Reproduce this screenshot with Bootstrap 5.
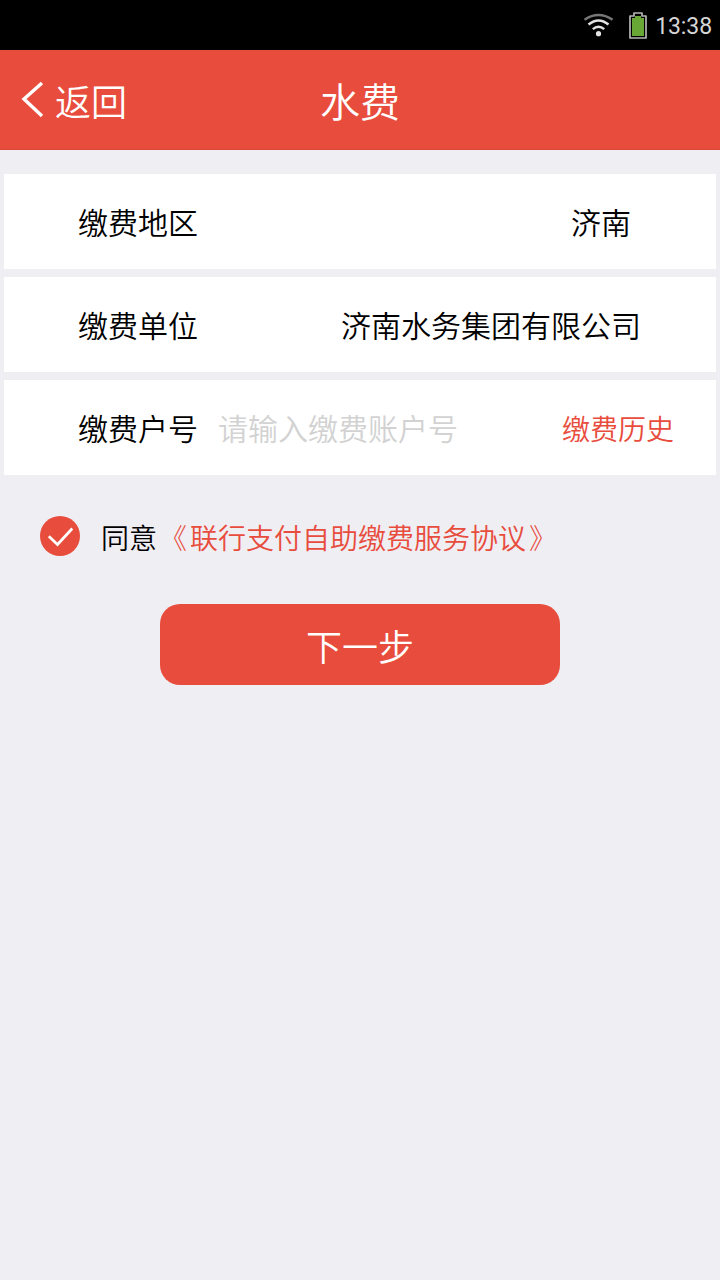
<!DOCTYPE html>
<html lang="zh-CN">
<head>
<meta charset="utf-8">
<meta name="viewport" content="width=device-width, initial-scale=1">
<title>水费</title>
<link href="https://cdn.jsdelivr.net/npm/bootstrap@5.3.0/dist/css/bootstrap.min.css" rel="stylesheet">
<style>
  :root { --brand: #e84c3d; }
  body { background: #efeef3; color: #000; font-family: "Noto Sans CJK SC", sans-serif; font-weight: 350; min-height: 1280px; line-height: 1; }
  .statusbar { height: 50px; background: #000; color: #d6d6d6; font: 400 23px/1 Roboto, sans-serif; padding: 0 8px 0 0; }
  .clock { letter-spacing: -.1px; padding-top: 2px; }
  .topbar { height: 100px; background: var(--brand); border-bottom: 1px solid #dc4638; color: #fff; display: grid; grid-template-columns: 1fr auto 1fr; padding: 0 21px; }
  .topbar h1 { font-size: 40px; font-weight: 350; line-height: 1; }
  .back { color: #fff; font-size: 36px; gap: 11px; }
  .fields { padding: 24px 4px 0; gap: 8px; }
  .field-row { height: 95px; background: #fff; font-size: 30px; padding: 0 75px 1px 74px; }
  .field-row.region { padding-right: 85px; }
  .field-row.account { padding-right: 42px; }
  .field-row .form-control { font-size: 30px; font-weight: 350; line-height: 1.4; margin-left: 20px; width: 320px; background: none; }
  .form-control::placeholder { color: #d2d2d2; opacity: 1; }
  .accent { color: var(--brand); font-size: 28px; }
  .account .accent { padding-top: 2px; }
  .agree { padding: 41px 40px 0; font-size: 28px; }
  .agree-text { margin: 1px 2px 0 21px; }
  .agree .accent { margin-top: 1px; font-weight: 300; }
  .agree .title-name { margin: 0 3px 0 3px; font-weight: 350; }
  .next { width: 400px; height: 81px; margin-top: 48px; border-radius: 20px; background: var(--brand) !important; color: #fff !important; font-size: 36px; font-weight: 350; line-height: 1; padding: 1px 0 0; border: 0; }
</style>
</head>
<body>
<div class="statusbar d-flex align-items-center justify-content-end">
  <svg width="30" height="24" viewBox="0 0 30 24" fill="none" stroke-width="2.4">
    <path d="M1.5 6.7Q15.5-2.6 29.5 6.7" stroke="#777"/>
    <path d="M5.5 11.5Q15.5 3.3 25.5 11.5M9.8 16.2Q15.5 11.2 21.2 16.2" stroke="#e2e2e2"/>
    <circle cx="15.5" cy="20.7" r="2.6" fill="#e2e2e2"/>
  </svg>
  <svg class="ms-3 me-2" width="18" height="27" viewBox="0 0 18 27">
    <path d="M1 4H5V1H13V4H17V26H1Z" fill="#000" stroke="#b5b5b5" stroke-width="1.7" stroke-linejoin="round"/>
    <path d="M3 6H6V4H12V6H15V24H3Z" fill="#68a735"/>
  </svg>
  <span class="clock">13:38</span>
</div>
<header class="topbar align-items-center">
  <a href="#" class="back d-flex align-items-center text-decoration-none">
    <svg width="23" height="38" viewBox="0 0 23 38" fill="none" stroke="#fff" stroke-width="3.4"><path d="M21 2L3 18L21 35"/></svg>
    <span>返回</span>
  </a>
  <h1 class="mb-0">水费</h1>
</header>
<main class="d-flex flex-column">
  <form class="fields d-flex flex-column">
    <div class="field-row region d-flex align-items-center justify-content-between"><span>缴费地区</span><span>济南</span></div>
    <div class="field-row unit d-flex align-items-center justify-content-between"><span>缴费单位</span><span>济南水务集团有限公司</span></div>
    <div class="field-row account d-flex align-items-center"><label for="acct">缴费户号</label><input id="acct" class="form-control border-0 p-0" placeholder="请输入缴费账户号"><a href="#" class="accent text-decoration-none ms-auto text-nowrap">缴费历史</a></div>
  </form>
  <div class="agree d-flex align-items-center">
    <svg width="40" height="40" viewBox="0 0 40 40" fill="none"><circle cx="20" cy="20" r="20" fill="#e84c3d"/><path d="M8.8 20.2L17.5 28.5L32.3 12.5" stroke="#fff" stroke-width="2.7"/></svg>
    <span class="agree-text">同意</span><a href="#" class="accent text-decoration-none">《<span class="title-name">联行支付自助缴费服务协议</span>》</a>
  </div>
  <button type="button" class="btn next mx-auto">下一步</button>
</main>
<script src="https://cdn.jsdelivr.net/npm/bootstrap@5.3.0/dist/js/bootstrap.bundle.min.js"></script>
</body>
</html>
